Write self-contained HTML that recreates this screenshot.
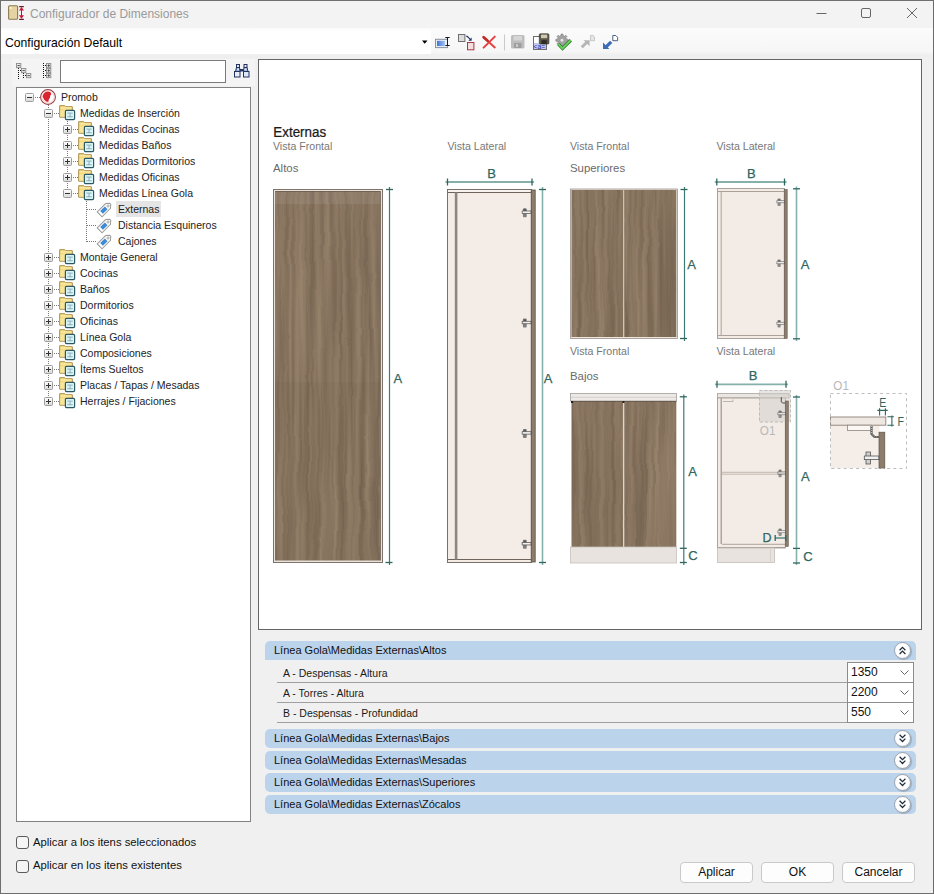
<!DOCTYPE html>
<html><head><meta charset="utf-8">
<style>
*{box-sizing:border-box;margin:0;padding:0}
html,body{width:934px;height:894px;overflow:hidden;background:#f0f0f0}
body{position:relative;font-family:"Liberation Sans",sans-serif;color:#000}
.a{position:absolute}
.t{position:absolute;white-space:nowrap;line-height:1}
#frame{left:0;top:0;width:934px;height:894px;border:1px solid #6f6f6f;border-right-color:#6a6a6a}
#title{left:1px;top:1px;width:932px;height:27px;background:#f3f3f3}
#tb{left:1px;top:28px;width:932px;height:30px;background:linear-gradient(#fbfbfb,#f6f6f6 80%,#f0f0f0 87%,#eeeeee)}
.tree{left:16px;top:87px;width:235px;height:735px;background:#fff;border:1px solid #828282}
.tr{position:absolute;height:16px;font-size:10.5px;line-height:16px;white-space:nowrap}
.exp{position:absolute;width:9px;height:9px;border:1px solid #a0a0a0;background:linear-gradient(#fff,#e6e6e6);border-radius:1px}
.exp:before{content:"";position:absolute;left:1px;top:3px;width:5px;height:1px;background:#3c3c3c}
.exp.p:after{content:"";position:absolute;left:3px;top:1px;width:1px;height:5px;background:#3c3c3c}
.dh{position:absolute;height:1px;background-image:linear-gradient(90deg,#8a8a8a 50%,transparent 50%);background-size:2px 1px}
.dv{position:absolute;width:1px;background-image:linear-gradient(#8a8a8a 50%,transparent 50%);background-size:1px 2px}
.hdr{position:absolute;left:265px;width:651px;height:19px;background:#bcd3ec;border-radius:5px;font-size:11px;line-height:19px;padding-left:9px;color:#111}
.chev{position:absolute;right:5px;top:1px;width:17px;height:17px;border-radius:50%;background:radial-gradient(circle at 45% 40%,#fff 55%,#e9ecf0);border:1px solid #9aa2ac;box-shadow:1px 1px 1px rgba(0,0,0,.2)}
.row{position:absolute;left:277px;width:571px;height:21px;border-bottom:1px solid #a0a0a0;font-size:10.5px;line-height:23px;padding-left:6px;color:#1a1a1a}
.cmb{position:absolute;left:847px;width:67px;height:21px;background:#fff;border:1px solid #8c8c8c;font-size:12px;line-height:19px;padding-left:3px;color:#111}
.cmb svg{position:absolute;right:4px;top:7px}
.btn{position:absolute;top:862px;width:73px;height:21px;background:#fdfdfd;border:1px solid #c9c9c9;border-radius:4px;font-size:12px;line-height:19px;text-align:center;color:#111}
.cb{position:absolute;left:16px;width:13px;height:13px;border:1px solid #5a5a5a;border-radius:3px;background:#f5f5f5}
</style></head><body>
<div class="a" id="title"></div>
<svg class="a" style="left:0;top:0" width="934" height="28">
 <defs><linearGradient id="door" x1="0" x2="1"><stop offset="0" stop-color="#c9b27c"/><stop offset=".5" stop-color="#e3d3a5"/><stop offset="1" stop-color="#b89c62"/></linearGradient></defs>
 <rect x="8.6" y="5.7" width="9" height="13.6" rx="1" fill="#e6d3a2" stroke="#8c7b55" stroke-width="1.1"/>
 <rect x="9.6" y="7" width="2" height="2" fill="#fff3c8"/>
 <path d="M19.2 6.6h4.6M19.2 19.3h4.6" stroke="#6a1524" stroke-width="1.3"/>
 <path d="M21.5 8.5v9" stroke="#6a1f2a" stroke-width=".9"/>
 <path d="M19 10.6l2.5-3.6 2.5 3.6zM19 15.2l2.5 3.6 2.5-3.6z" fill="#c8163a"/>
 <text x="30" y="17.7" font-family="Liberation Sans" font-size="12" fill="#9a9a9a">Configurador de Dimensiones</text>
 <path d="M816.5 13.5h10" stroke="#666" stroke-width="1"/>
 <rect x="861.5" y="8.5" width="9" height="9" rx="1.5" fill="none" stroke="#666" stroke-width="1"/>
 <path d="M907 8l10 10M917 8l-10 10" stroke="#666" stroke-width="1"/>
</svg>
<div class="a" id="tb"></div>
<div class="a" style="left:1px;top:30px;width:430px;height:24px;background:#fff"></div>
<div class="t" style="left:5px;top:37px;font-size:12.2px;color:#000">Configuración Default</div>
<svg class="a" style="left:0;top:28px" width="934" height="30">
 <path d="M422 12.6h5.5l-2.75 3.2z" fill="#000"/>
 <!-- rename icon -->
 <defs>
  <linearGradient id="blu" x1="0" x2="1"><stop offset="0" stop-color="#3c74d6"/><stop offset="1" stop-color="#a9c3ee"/></linearGradient>
  <linearGradient id="gearg" x1="0" y1="0" x2="0" y2="1"><stop offset="0" stop-color="#b0b0b0"/><stop offset="1" stop-color="#7d7d7d"/></linearGradient>
 </defs>
 <rect x="435.5" y="11.3" width="12" height="8.3" fill="#eef1f6" stroke="#8792a0" stroke-width="1"/>
 <rect x="437" y="12.8" width="8" height="5.3" fill="url(#blu)"/>
 <path d="M445.3 9.5h4.4M447.5 9.5v8M445.3 17.5h4.4" stroke="#1a1a1a" stroke-width="1" fill="none"/>
 <!-- move icon -->
 <rect x="458.5" y="6.5" width="6.4" height="7" fill="#dcdcdc" stroke="#6f6f6f" stroke-width="1"/>
 <path d="M466 8.3h1.2l3.3 3.3" stroke="#1b2f66" stroke-width="1.1" fill="none"/>
 <path d="M471.6 12.7v-3.2l-3.2 3.2z" fill="#1b2f66"/>
 <rect x="467.5" y="14.5" width="6.4" height="7.3" fill="#f5dede" stroke="#a8384a" stroke-width="1"/>
 <!-- red X -->
 <path d="M483.6 9.2l11.2 10.2M494.8 8.6l-11.2 11" stroke="#e5403f" stroke-width="2" stroke-linecap="round"/>
 <path d="M483.6 9.2l4 3.6" stroke="#c42a2a" stroke-width="2.6" stroke-linecap="round"/>
 <path d="M504.5 6.5v16" stroke="#c9c9c9" stroke-width="1"/>
 <!-- save grey -->
 <rect x="511" y="7" width="13.5" height="13.5" rx="1.5" fill="#bdbdbd"/>
 <rect x="513.5" y="8" width="8.5" height="4.5" fill="#d6d6d6"/>
 <rect x="514" y="15" width="7.5" height="5" fill="#9e9e9e"/>
 <rect x="516" y="16" width="2" height="3" fill="#c9c9c9"/>
 <!-- save as -->
 <rect x="533.5" y="8.5" width="13" height="13" fill="#fff" stroke="#6d6d6d" stroke-width="1"/>
 <rect x="534" y="15" width="12" height="6" fill="#c3c9ee"/>
 <text x="533.6" y="20.8" font-family="Liberation Sans" font-size="6.8" fill="#1c2a9c">&lt;a=</text>
 <rect x="539.3" y="5.8" width="9.6" height="10.2" rx="1" fill="#595548" stroke="#3b3a33" stroke-width=".7"/>
 <rect x="541" y="6.6" width="6.2" height="3.6" fill="#cfc9b0"/>
 <rect x="541.5" y="12.2" width="5.2" height="3.8" fill="#2c2b26"/>
 <!-- gear check -->
 <g transform="translate(562,12.2)">
  <path d="M4.59 -1.03 L6.12 -0.99 L6.12 0.99 L4.59 1.03 L3.97 2.52 L5.03 3.63 L3.63 5.03 L2.52 3.97 L1.03 4.59 L0.99 6.12 L-0.99 6.12 L-1.03 4.59 L-2.52 3.97 L-3.63 5.03 L-5.03 3.63 L-3.97 2.52 L-4.59 1.03 L-6.12 0.99 L-6.12 -0.99 L-4.59 -1.03 L-3.97 -2.52 L-5.03 -3.63 L-3.63 -5.03 L-2.52 -3.97 L-1.03 -4.59 L-0.99 -6.12 L0.99 -6.12 L1.03 -4.59 L2.52 -3.97 L3.63 -5.03 L5.03 -3.63 L3.97 -2.52Z" fill="#a3a3a3" stroke="#7d7d7d" stroke-width=".6"/>
  <circle r="2" fill="#e6e6e6" stroke="#8a8a8a" stroke-width=".6"/>
 </g>
 <path d="M558.5 16.2l4 4.2 8.3-8.2" stroke="#2c7a2e" stroke-width="3.4" fill="none" stroke-linejoin="miter"/>
 <path d="M558.5 16.2l4 4.2 8.3-8.2" stroke="#6ad35e" stroke-width="1.8" fill="none" stroke-linejoin="miter"/>
 <!-- grey arrow NE -->
 <path d="M590.5 7.5h2.6l1.4 1.4v3.8h-4z" fill="#e6e6e6" stroke="#bdbdbd" stroke-width=".8"/>
 <path d="M581.8 19.3l5.6-5.6" stroke="#b5b5b5" stroke-width="3"/>
 <path d="M583.6 12.2h6v6z" fill="#b5b5b5"/>
 <!-- blue arrow SW -->
 <path d="M612.8 7.5h3l1.8 1.8v3.4h-4.8z" fill="#fff" stroke="#3a4f7a" stroke-width=".9"/>
 <path d="M611.2 13.8l-5.4 5.4" stroke="#3d6db4" stroke-width="3.2"/>
 <path d="M603 14.5v6.4h6.4z" fill="#3d6db4"/>
</svg>

<div class="a" style="left:12px;top:59px;width:243px;height:27px;background:#f4f4f4"></div>
<svg class="a" style="left:0;top:56px" width="260" height="30">
 <g fill="#111"><rect x="18" y="12" width="1" height="1"/><rect x="18" y="14" width="1" height="1"/><rect x="18" y="16" width="1" height="1"/><rect x="18" y="18" width="1" height="1"/><rect x="18" y="20" width="1" height="1"/><rect x="18" y="22" width="1" height="1"/><rect x="20" y="14" width="1" height="1"/><rect x="23" y="17" width="1" height="1"/><rect x="23" y="19" width="1" height="1"/><rect x="23" y="21" width="1" height="1"/><rect x="25" y="19" width="1" height="1"/><rect x="43" y="7" width="1" height="1"/><rect x="43" y="9" width="1" height="1"/><rect x="43" y="11" width="1" height="1"/><rect x="43" y="13" width="1" height="1"/><rect x="43" y="15" width="1" height="1"/><rect x="43" y="17" width="1" height="1"/><rect x="43" y="19" width="1" height="1"/><rect x="43" y="21" width="1" height="1"/><rect x="45" y="9" width="1" height="1"/><rect x="45" y="14" width="1" height="1"/><rect x="45" y="19" width="1" height="1"/></g><rect x="16.5" y="7.5" width="4.3" height="4.2" fill="#e8e8e8" stroke="#8d8d8d" stroke-width=".9"/><path d="M17.5 9.6h2.4" stroke="#444" stroke-width=".9"/><rect x="21.5" y="12.5" width="4.3" height="4.2" fill="#e8e8e8" stroke="#8d8d8d" stroke-width=".9"/><path d="M22.5 14.6h2.4" stroke="#444" stroke-width=".9"/><rect x="26.5" y="17.5" width="4.3" height="4.2" fill="#e8e8e8" stroke="#8d8d8d" stroke-width=".9"/><path d="M27.5 19.6h2.4" stroke="#444" stroke-width=".9"/><rect x="46.5" y="7.5" width="4.3" height="4.2" fill="#e8e8e8" stroke="#8d8d8d" stroke-width=".9"/><path d="M47.5 9.6h2.4" stroke="#444" stroke-width=".9"/><path d="M48.7 8.3v2.6" stroke="#444" stroke-width=".9"/><rect x="46.5" y="12.5" width="4.3" height="4.2" fill="#e8e8e8" stroke="#8d8d8d" stroke-width=".9"/><path d="M47.5 14.6h2.4" stroke="#444" stroke-width=".9"/><path d="M48.7 13.3v2.6" stroke="#444" stroke-width=".9"/><rect x="46.5" y="17.5" width="4.3" height="4.2" fill="#e8e8e8" stroke="#8d8d8d" stroke-width=".9"/><path d="M47.5 19.6h2.4" stroke="#444" stroke-width=".9"/><path d="M48.7 18.3v2.6" stroke="#444" stroke-width=".9"/>
 <rect x="60.5" y="4.5" width="165" height="22" fill="#fff" stroke="#7a7a7a"/>
 <!-- binoculars -->
 <g stroke="#22335f" stroke-width="1">
  <rect x="234.5" y="15.5" width="5.5" height="5.5" fill="#e6eefa"/>
  <rect x="243.5" y="15.5" width="5.5" height="5.5" fill="#dce6f7"/>
  <path d="M235.5 15.5l1-4h3l0.5 4z" fill="#9fb3dc"/>
  <path d="M243.5 15.5l0.5-4h3l1 4z" fill="#9fb3dc"/>
  <rect x="236.5" y="8.5" width="3" height="3" fill="#dfe7f6"/>
  <rect x="244" y="8.5" width="3" height="3" fill="#dfe7f6"/>
 </g>
 <rect x="240" y="13" width="3.5" height="2.5" fill="#22335f"/>
 <path d="M237 13.2h2M244.5 13.2h2" stroke="#f4f8ff" stroke-width="1"/>
</svg>
<div class="a tree"></div>
<div class="a" style="left:116px;top:201px;width:45px;height:16px;background:#e5e5e5"></div>
<!--TREE--><svg class="a" style="left:0;top:0" width="260" height="420"><defs><linearGradient id="expg" x1="0" y1="0" x2="0" y2="1"><stop offset="0" stop-color="#ffffff"/><stop offset="1" stop-color="#d9d9d9"/></linearGradient>
<linearGradient id="foldg" x1="0" y1="0" x2="0" y2="1"><stop offset="0" stop-color="#f5e6a8"/><stop offset="1" stop-color="#e2c06a"/></linearGradient>
<g id="fold">
 <path d="M0.7 0.7H5.8L6.8 1.7H13.3V12.2H0.7Z" fill="#f5dc84" stroke="#a88b45" stroke-width="1"/>
 <path d="M1.5 2.8H12.5" stroke="#fbeaa8" stroke-width="1.2"/>
 <rect x="1.3" y="5.6" width="6" height="6" fill="#f8e59b"/>
 <rect x="6.4" y="5.4" width="9.2" height="9.2" rx="1" fill="#d9f3f7" stroke="#2f5962" stroke-width="1.2"/>
 <path d="M8.3 8.1h5.4M8.3 11.7h5.4M11 8.1v4" stroke="#86aab2" stroke-width=".9"/>
</g>
<g id="tag">
 <g transform="translate(7.8,8.2) rotate(-45)">
  <path d="M-7.3 -3.4H4.6L7.6 -0.8V0.8L4.6 3.4H-7.3z" fill="#fdfdfd" stroke="#9b9b9b" stroke-width="1"/>
  <rect x="-4.6" y="-1.9" width="6.6" height="3.8" fill="#3d8ad6"/>
  <circle cx="4.6" cy="0" r="1.1" fill="#fff" stroke="#8a8a8a" stroke-width=".7"/>
 </g>
</g>
<g id="promob">
 <circle cx="8" cy="8" r="7.4" fill="#fff" stroke="#9a3d44" stroke-width="1.1"/>
 <circle cx="8" cy="8" r="6.2" fill="none" stroke="#f4c4c4" stroke-width=".9"/>
 <path d="M2.6 7.5L3.5 5 5.5 3 8 2.4 10.5 3.3 11.3 5.3 10.2 6.8 10 8.4 8.8 10.6 8.3 13 6 12.5 4 10.6z" fill="#d9232e"/>
</g>
</defs><g fill="#7a7a7a"><rect x="48" y="105" width="1" height="1"/><rect x="48" y="107" width="1" height="1"/><rect x="48" y="109" width="1" height="1"/><rect x="48" y="111" width="1" height="1"/><rect x="48" y="113" width="1" height="1"/><rect x="48" y="115" width="1" height="1"/><rect x="48" y="117" width="1" height="1"/><rect x="48" y="119" width="1" height="1"/><rect x="48" y="121" width="1" height="1"/><rect x="48" y="123" width="1" height="1"/><rect x="48" y="125" width="1" height="1"/><rect x="48" y="127" width="1" height="1"/><rect x="48" y="129" width="1" height="1"/><rect x="48" y="131" width="1" height="1"/><rect x="48" y="133" width="1" height="1"/><rect x="48" y="135" width="1" height="1"/><rect x="48" y="137" width="1" height="1"/><rect x="48" y="139" width="1" height="1"/><rect x="48" y="141" width="1" height="1"/><rect x="48" y="143" width="1" height="1"/><rect x="48" y="145" width="1" height="1"/><rect x="48" y="147" width="1" height="1"/><rect x="48" y="149" width="1" height="1"/><rect x="48" y="151" width="1" height="1"/><rect x="48" y="153" width="1" height="1"/><rect x="48" y="155" width="1" height="1"/><rect x="48" y="157" width="1" height="1"/><rect x="48" y="159" width="1" height="1"/><rect x="48" y="161" width="1" height="1"/><rect x="48" y="163" width="1" height="1"/><rect x="48" y="165" width="1" height="1"/><rect x="48" y="167" width="1" height="1"/><rect x="48" y="169" width="1" height="1"/><rect x="48" y="171" width="1" height="1"/><rect x="48" y="173" width="1" height="1"/><rect x="48" y="175" width="1" height="1"/><rect x="48" y="177" width="1" height="1"/><rect x="48" y="179" width="1" height="1"/><rect x="48" y="181" width="1" height="1"/><rect x="48" y="183" width="1" height="1"/><rect x="48" y="185" width="1" height="1"/><rect x="48" y="187" width="1" height="1"/><rect x="48" y="189" width="1" height="1"/><rect x="48" y="191" width="1" height="1"/><rect x="48" y="193" width="1" height="1"/><rect x="48" y="195" width="1" height="1"/><rect x="48" y="197" width="1" height="1"/><rect x="48" y="199" width="1" height="1"/><rect x="48" y="201" width="1" height="1"/><rect x="48" y="203" width="1" height="1"/><rect x="48" y="205" width="1" height="1"/><rect x="48" y="207" width="1" height="1"/><rect x="48" y="209" width="1" height="1"/><rect x="48" y="211" width="1" height="1"/><rect x="48" y="213" width="1" height="1"/><rect x="48" y="215" width="1" height="1"/><rect x="48" y="217" width="1" height="1"/><rect x="48" y="219" width="1" height="1"/><rect x="48" y="221" width="1" height="1"/><rect x="48" y="223" width="1" height="1"/><rect x="48" y="225" width="1" height="1"/><rect x="48" y="227" width="1" height="1"/><rect x="48" y="229" width="1" height="1"/><rect x="48" y="231" width="1" height="1"/><rect x="48" y="233" width="1" height="1"/><rect x="48" y="235" width="1" height="1"/><rect x="48" y="237" width="1" height="1"/><rect x="48" y="239" width="1" height="1"/><rect x="48" y="241" width="1" height="1"/><rect x="48" y="243" width="1" height="1"/><rect x="48" y="245" width="1" height="1"/><rect x="48" y="247" width="1" height="1"/><rect x="48" y="249" width="1" height="1"/><rect x="48" y="251" width="1" height="1"/><rect x="48" y="253" width="1" height="1"/><rect x="48" y="255" width="1" height="1"/><rect x="48" y="257" width="1" height="1"/><rect x="48" y="259" width="1" height="1"/><rect x="48" y="261" width="1" height="1"/><rect x="48" y="263" width="1" height="1"/><rect x="48" y="265" width="1" height="1"/><rect x="48" y="267" width="1" height="1"/><rect x="48" y="269" width="1" height="1"/><rect x="48" y="271" width="1" height="1"/><rect x="48" y="273" width="1" height="1"/><rect x="48" y="275" width="1" height="1"/><rect x="48" y="277" width="1" height="1"/><rect x="48" y="279" width="1" height="1"/><rect x="48" y="281" width="1" height="1"/><rect x="48" y="283" width="1" height="1"/><rect x="48" y="285" width="1" height="1"/><rect x="48" y="287" width="1" height="1"/><rect x="48" y="289" width="1" height="1"/><rect x="48" y="291" width="1" height="1"/><rect x="48" y="293" width="1" height="1"/><rect x="48" y="295" width="1" height="1"/><rect x="48" y="297" width="1" height="1"/><rect x="48" y="299" width="1" height="1"/><rect x="48" y="301" width="1" height="1"/><rect x="48" y="303" width="1" height="1"/><rect x="48" y="305" width="1" height="1"/><rect x="48" y="307" width="1" height="1"/><rect x="48" y="309" width="1" height="1"/><rect x="48" y="311" width="1" height="1"/><rect x="48" y="313" width="1" height="1"/><rect x="48" y="315" width="1" height="1"/><rect x="48" y="317" width="1" height="1"/><rect x="48" y="319" width="1" height="1"/><rect x="48" y="321" width="1" height="1"/><rect x="48" y="323" width="1" height="1"/><rect x="48" y="325" width="1" height="1"/><rect x="48" y="327" width="1" height="1"/><rect x="48" y="329" width="1" height="1"/><rect x="48" y="331" width="1" height="1"/><rect x="48" y="333" width="1" height="1"/><rect x="48" y="335" width="1" height="1"/><rect x="48" y="337" width="1" height="1"/><rect x="48" y="339" width="1" height="1"/><rect x="48" y="341" width="1" height="1"/><rect x="48" y="343" width="1" height="1"/><rect x="48" y="345" width="1" height="1"/><rect x="48" y="347" width="1" height="1"/><rect x="48" y="349" width="1" height="1"/><rect x="48" y="351" width="1" height="1"/><rect x="48" y="353" width="1" height="1"/><rect x="48" y="355" width="1" height="1"/><rect x="48" y="357" width="1" height="1"/><rect x="48" y="359" width="1" height="1"/><rect x="48" y="361" width="1" height="1"/><rect x="48" y="363" width="1" height="1"/><rect x="48" y="365" width="1" height="1"/><rect x="48" y="367" width="1" height="1"/><rect x="48" y="369" width="1" height="1"/><rect x="48" y="371" width="1" height="1"/><rect x="48" y="373" width="1" height="1"/><rect x="48" y="375" width="1" height="1"/><rect x="48" y="377" width="1" height="1"/><rect x="48" y="379" width="1" height="1"/><rect x="48" y="381" width="1" height="1"/><rect x="48" y="383" width="1" height="1"/><rect x="48" y="385" width="1" height="1"/><rect x="48" y="387" width="1" height="1"/><rect x="48" y="389" width="1" height="1"/><rect x="48" y="391" width="1" height="1"/><rect x="48" y="393" width="1" height="1"/><rect x="48" y="395" width="1" height="1"/><rect x="48" y="397" width="1" height="1"/><rect x="48" y="399" width="1" height="1"/><rect x="48" y="401" width="1" height="1"/><rect x="67" y="121" width="1" height="1"/><rect x="67" y="123" width="1" height="1"/><rect x="67" y="125" width="1" height="1"/><rect x="67" y="127" width="1" height="1"/><rect x="67" y="129" width="1" height="1"/><rect x="67" y="131" width="1" height="1"/><rect x="67" y="133" width="1" height="1"/><rect x="67" y="135" width="1" height="1"/><rect x="67" y="137" width="1" height="1"/><rect x="67" y="139" width="1" height="1"/><rect x="67" y="141" width="1" height="1"/><rect x="67" y="143" width="1" height="1"/><rect x="67" y="145" width="1" height="1"/><rect x="67" y="147" width="1" height="1"/><rect x="67" y="149" width="1" height="1"/><rect x="67" y="151" width="1" height="1"/><rect x="67" y="153" width="1" height="1"/><rect x="67" y="155" width="1" height="1"/><rect x="67" y="157" width="1" height="1"/><rect x="67" y="159" width="1" height="1"/><rect x="67" y="161" width="1" height="1"/><rect x="67" y="163" width="1" height="1"/><rect x="67" y="165" width="1" height="1"/><rect x="67" y="167" width="1" height="1"/><rect x="67" y="169" width="1" height="1"/><rect x="67" y="171" width="1" height="1"/><rect x="67" y="173" width="1" height="1"/><rect x="67" y="175" width="1" height="1"/><rect x="67" y="177" width="1" height="1"/><rect x="67" y="179" width="1" height="1"/><rect x="67" y="181" width="1" height="1"/><rect x="67" y="183" width="1" height="1"/><rect x="67" y="185" width="1" height="1"/><rect x="67" y="187" width="1" height="1"/><rect x="67" y="189" width="1" height="1"/><rect x="67" y="191" width="1" height="1"/><rect x="67" y="193" width="1" height="1"/><rect x="86" y="201" width="1" height="1"/><rect x="86" y="203" width="1" height="1"/><rect x="86" y="205" width="1" height="1"/><rect x="86" y="207" width="1" height="1"/><rect x="86" y="209" width="1" height="1"/><rect x="86" y="211" width="1" height="1"/><rect x="86" y="213" width="1" height="1"/><rect x="86" y="215" width="1" height="1"/><rect x="86" y="217" width="1" height="1"/><rect x="86" y="219" width="1" height="1"/><rect x="86" y="221" width="1" height="1"/><rect x="86" y="223" width="1" height="1"/><rect x="86" y="225" width="1" height="1"/><rect x="86" y="227" width="1" height="1"/><rect x="86" y="229" width="1" height="1"/><rect x="86" y="231" width="1" height="1"/><rect x="86" y="233" width="1" height="1"/><rect x="86" y="235" width="1" height="1"/><rect x="86" y="237" width="1" height="1"/><rect x="86" y="239" width="1" height="1"/><rect x="86" y="241" width="1" height="1"/><rect x="35" y="97" width="1" height="1"/><rect x="37" y="97" width="1" height="1"/><rect x="39" y="97" width="1" height="1"/><rect x="54" y="113" width="1" height="1"/><rect x="56" y="113" width="1" height="1"/><rect x="58" y="113" width="1" height="1"/><rect x="73" y="129" width="1" height="1"/><rect x="75" y="129" width="1" height="1"/><rect x="77" y="129" width="1" height="1"/><rect x="73" y="145" width="1" height="1"/><rect x="75" y="145" width="1" height="1"/><rect x="77" y="145" width="1" height="1"/><rect x="73" y="161" width="1" height="1"/><rect x="75" y="161" width="1" height="1"/><rect x="77" y="161" width="1" height="1"/><rect x="73" y="177" width="1" height="1"/><rect x="75" y="177" width="1" height="1"/><rect x="77" y="177" width="1" height="1"/><rect x="73" y="193" width="1" height="1"/><rect x="75" y="193" width="1" height="1"/><rect x="77" y="193" width="1" height="1"/><rect x="87" y="209" width="1" height="1"/><rect x="89" y="209" width="1" height="1"/><rect x="91" y="209" width="1" height="1"/><rect x="93" y="209" width="1" height="1"/><rect x="95" y="209" width="1" height="1"/><rect x="87" y="225" width="1" height="1"/><rect x="89" y="225" width="1" height="1"/><rect x="91" y="225" width="1" height="1"/><rect x="93" y="225" width="1" height="1"/><rect x="95" y="225" width="1" height="1"/><rect x="87" y="241" width="1" height="1"/><rect x="89" y="241" width="1" height="1"/><rect x="91" y="241" width="1" height="1"/><rect x="93" y="241" width="1" height="1"/><rect x="95" y="241" width="1" height="1"/><rect x="54" y="257" width="1" height="1"/><rect x="56" y="257" width="1" height="1"/><rect x="58" y="257" width="1" height="1"/><rect x="54" y="273" width="1" height="1"/><rect x="56" y="273" width="1" height="1"/><rect x="58" y="273" width="1" height="1"/><rect x="54" y="289" width="1" height="1"/><rect x="56" y="289" width="1" height="1"/><rect x="58" y="289" width="1" height="1"/><rect x="54" y="305" width="1" height="1"/><rect x="56" y="305" width="1" height="1"/><rect x="58" y="305" width="1" height="1"/><rect x="54" y="321" width="1" height="1"/><rect x="56" y="321" width="1" height="1"/><rect x="58" y="321" width="1" height="1"/><rect x="54" y="337" width="1" height="1"/><rect x="56" y="337" width="1" height="1"/><rect x="58" y="337" width="1" height="1"/><rect x="54" y="353" width="1" height="1"/><rect x="56" y="353" width="1" height="1"/><rect x="58" y="353" width="1" height="1"/><rect x="54" y="369" width="1" height="1"/><rect x="56" y="369" width="1" height="1"/><rect x="58" y="369" width="1" height="1"/><rect x="54" y="385" width="1" height="1"/><rect x="56" y="385" width="1" height="1"/><rect x="58" y="385" width="1" height="1"/><rect x="54" y="401" width="1" height="1"/><rect x="56" y="401" width="1" height="1"/><rect x="58" y="401" width="1" height="1"/></g><g transform="translate(25,93)"><rect x=".5" y=".5" width="8" height="8" rx="1" fill="url(#expg)" stroke="#9d9d9d"/><path d="M2 4.5h5" stroke="#333"/></g><use href="#promob" x="40" y="89"/><g transform="translate(44,109)"><rect x=".5" y=".5" width="8" height="8" rx="1" fill="url(#expg)" stroke="#9d9d9d"/><path d="M2 4.5h5" stroke="#333"/></g><use href="#fold" x="59" y="105"/><g transform="translate(63,125)"><rect x=".5" y=".5" width="8" height="8" rx="1" fill="url(#expg)" stroke="#9d9d9d"/><path d="M2 4.5h5" stroke="#333"/><path d="M4.5 2v5" stroke="#333"/></g><use href="#fold" x="78" y="121"/><g transform="translate(63,141)"><rect x=".5" y=".5" width="8" height="8" rx="1" fill="url(#expg)" stroke="#9d9d9d"/><path d="M2 4.5h5" stroke="#333"/><path d="M4.5 2v5" stroke="#333"/></g><use href="#fold" x="78" y="137"/><g transform="translate(63,157)"><rect x=".5" y=".5" width="8" height="8" rx="1" fill="url(#expg)" stroke="#9d9d9d"/><path d="M2 4.5h5" stroke="#333"/><path d="M4.5 2v5" stroke="#333"/></g><use href="#fold" x="78" y="153"/><g transform="translate(63,173)"><rect x=".5" y=".5" width="8" height="8" rx="1" fill="url(#expg)" stroke="#9d9d9d"/><path d="M2 4.5h5" stroke="#333"/><path d="M4.5 2v5" stroke="#333"/></g><use href="#fold" x="78" y="169"/><g transform="translate(63,189)"><rect x=".5" y=".5" width="8" height="8" rx="1" fill="url(#expg)" stroke="#9d9d9d"/><path d="M2 4.5h5" stroke="#333"/></g><use href="#fold" x="78" y="185"/><use href="#tag" x="97" y="201"/><use href="#tag" x="97" y="217"/><use href="#tag" x="97" y="233"/><g transform="translate(44,253)"><rect x=".5" y=".5" width="8" height="8" rx="1" fill="url(#expg)" stroke="#9d9d9d"/><path d="M2 4.5h5" stroke="#333"/><path d="M4.5 2v5" stroke="#333"/></g><use href="#fold" x="59" y="249"/><g transform="translate(44,269)"><rect x=".5" y=".5" width="8" height="8" rx="1" fill="url(#expg)" stroke="#9d9d9d"/><path d="M2 4.5h5" stroke="#333"/><path d="M4.5 2v5" stroke="#333"/></g><use href="#fold" x="59" y="265"/><g transform="translate(44,285)"><rect x=".5" y=".5" width="8" height="8" rx="1" fill="url(#expg)" stroke="#9d9d9d"/><path d="M2 4.5h5" stroke="#333"/><path d="M4.5 2v5" stroke="#333"/></g><use href="#fold" x="59" y="281"/><g transform="translate(44,301)"><rect x=".5" y=".5" width="8" height="8" rx="1" fill="url(#expg)" stroke="#9d9d9d"/><path d="M2 4.5h5" stroke="#333"/><path d="M4.5 2v5" stroke="#333"/></g><use href="#fold" x="59" y="297"/><g transform="translate(44,317)"><rect x=".5" y=".5" width="8" height="8" rx="1" fill="url(#expg)" stroke="#9d9d9d"/><path d="M2 4.5h5" stroke="#333"/><path d="M4.5 2v5" stroke="#333"/></g><use href="#fold" x="59" y="313"/><g transform="translate(44,333)"><rect x=".5" y=".5" width="8" height="8" rx="1" fill="url(#expg)" stroke="#9d9d9d"/><path d="M2 4.5h5" stroke="#333"/><path d="M4.5 2v5" stroke="#333"/></g><use href="#fold" x="59" y="329"/><g transform="translate(44,349)"><rect x=".5" y=".5" width="8" height="8" rx="1" fill="url(#expg)" stroke="#9d9d9d"/><path d="M2 4.5h5" stroke="#333"/><path d="M4.5 2v5" stroke="#333"/></g><use href="#fold" x="59" y="345"/><g transform="translate(44,365)"><rect x=".5" y=".5" width="8" height="8" rx="1" fill="url(#expg)" stroke="#9d9d9d"/><path d="M2 4.5h5" stroke="#333"/><path d="M4.5 2v5" stroke="#333"/></g><use href="#fold" x="59" y="361"/><g transform="translate(44,381)"><rect x=".5" y=".5" width="8" height="8" rx="1" fill="url(#expg)" stroke="#9d9d9d"/><path d="M2 4.5h5" stroke="#333"/><path d="M4.5 2v5" stroke="#333"/></g><use href="#fold" x="59" y="377"/><g transform="translate(44,397)"><rect x=".5" y=".5" width="8" height="8" rx="1" fill="url(#expg)" stroke="#9d9d9d"/><path d="M2 4.5h5" stroke="#333"/><path d="M4.5 2v5" stroke="#333"/></g><use href="#fold" x="59" y="393"/></svg>
<div class="t" style="left:61px;top:92px;font-size:10.5px;color:#222">Promob</div><div class="t" style="left:80px;top:108px;font-size:10.5px;color:#222">Medidas de Inserción</div><div class="t" style="left:99px;top:124px;font-size:10.5px;color:#222">Medidas Cocinas</div><div class="t" style="left:99px;top:140px;font-size:10.5px;color:#222">Medidas Baños</div><div class="t" style="left:99px;top:156px;font-size:10.5px;color:#222">Medidas Dormitorios</div><div class="t" style="left:99px;top:172px;font-size:10.5px;color:#222">Medidas Oficinas</div><div class="t" style="left:99px;top:188px;font-size:10.5px;color:#222">Medidas Línea Gola</div><div class="t" style="left:118px;top:204px;font-size:10.5px;color:#222">Externas</div><div class="t" style="left:118px;top:220px;font-size:10.5px;color:#222">Distancia Esquineros</div><div class="t" style="left:118px;top:236px;font-size:10.5px;color:#222">Cajones</div><div class="t" style="left:80px;top:252px;font-size:10.5px;color:#222">Montaje General</div><div class="t" style="left:80px;top:268px;font-size:10.5px;color:#222">Cocinas</div><div class="t" style="left:80px;top:284px;font-size:10.5px;color:#222">Baños</div><div class="t" style="left:80px;top:300px;font-size:10.5px;color:#222">Dormitorios</div><div class="t" style="left:80px;top:316px;font-size:10.5px;color:#222">Oficinas</div><div class="t" style="left:80px;top:332px;font-size:10.5px;color:#222">Línea Gola</div><div class="t" style="left:80px;top:348px;font-size:10.5px;color:#222">Composiciones</div><div class="t" style="left:80px;top:364px;font-size:10.5px;color:#222">Ítems Sueltos</div><div class="t" style="left:80px;top:380px;font-size:10.5px;color:#222">Placas / Tapas / Mesadas</div><div class="t" style="left:80px;top:396px;font-size:10.5px;color:#222">Herrajes / Fijaciones</div><!--/TREE-->
<!--DRAW--><svg class="a" style="left:258px;top:59px" width="664" height="571" viewBox="258 59 664 571" font-family="Liberation Sans"><defs>
<filter id="grain" x="0" y="0" width="100%" height="100%" color-interpolation-filters="sRGB">
 <feTurbulence type="fractalNoise" baseFrequency="0.2 0.005" numOctaves="3" seed="11" result="n"/>
 <feTurbulence type="fractalNoise" baseFrequency="0.02 0.03" numOctaves="2" seed="3" result="w"/>
 <feDisplacementMap in="n" in2="w" scale="5" xChannelSelector="R" yChannelSelector="G" result="d"/>
 <feGaussianBlur in="d" stdDeviation="0.35" result="b"/>
 <feColorMatrix in="b" type="matrix" values="0.2 0 0 0 0.43  0.18 0 0 0 0.364  0.16 0 0 0 0.292  0 0 0 0 1"/>
</filter>
<pattern id="wood" patternUnits="userSpaceOnUse" x="0" y="0" width="934" height="600">
 <rect width="934" height="600" fill="#8a7561"/>
 <rect width="934" height="600" filter="url(#grain)" opacity="1"/>
</pattern>
</defs><rect x="258.5" y="59.5" width="663" height="570" fill="#fff" stroke="#646464"/><text transform="translate(273.3,136.6) scale(0.93,1)" font-size="14.4" fill="#1a1a1a" stroke="#1a1a1a" stroke-width=".25">Externas</text><text x="273" y="150" font-size="10.6" fill="#777777">Vista Frontal</text><text x="447.5" y="150" font-size="10.6" fill="#777777">Vista Lateral</text><text x="570" y="150" font-size="10.6" fill="#777777">Vista Frontal</text><text x="716.5" y="150" font-size="10.6" fill="#777777">Vista Lateral</text><text x="570" y="355.3" font-size="10.6" fill="#777777">Vista Frontal</text><text x="716.5" y="355.3" font-size="10.6" fill="#777777">Vista Lateral</text><text x="273" y="171.5" font-size="11.4" fill="#6a6a6a">Altos</text><text x="570" y="171.5" font-size="11.4" fill="#6a6a6a">Superiores</text><text x="570" y="379.5" font-size="11.4" fill="#6a6a6a">Bajos</text><rect x="273.5" y="189.5" width="109" height="373" fill="#e9e2db" stroke="#7d736a"/><rect x="275" y="191" width="105.5" height="369.5" fill="url(#wood)"/><rect x="275" y="191" width="105.5" height="13" fill="#fff" opacity=".07"/><rect x="275" y="382" width="105.5" height="178.5" fill="#000" opacity=".025"/><path d="M275.5 191.5H380.5V560.5" stroke="#5d5044" stroke-width="1" fill="none" opacity=".6"/><path d="M389.5 187V565" stroke="#3f7a74" stroke-width="1.2"/><path d="M386.0 189.5h7.0" stroke="#2f665e" stroke-width="1.3"/><path d="M385.5 562.5h7.0" stroke="#2f665e" stroke-width="1.3"/><text x="393.5" y="382.8" font-size="13" fill="#2f665e" stroke="#2f665e" stroke-width=".25">A</text><rect x="447.5" y="189.5" width="84" height="373" fill="#f4ece6" stroke="#7a7068"/><rect x="448" y="190" width="83" height="2.5" fill="#f7f2ee"/><path d="M448 192.5H531" stroke="#6e645c" stroke-width="1"/><path d="M448 559.5H531" stroke="#6e645c" stroke-width="1"/><rect x="454.8" y="192.5" width="2.6" height="367" fill="#8f8680"/><rect x="531.2" y="190" width="4" height="372" fill="#8c7d6c" stroke="#5e5348" stroke-width=".8"/><g transform="translate(531,212.5) scale(0.95)" opacity="0.85"><rect x="-8.5" y="-4.5" width="4" height="9.5" rx="1" fill="#6d6d6d"/><rect x="-7.8" y="-3.6" width="2.6" height="2" fill="#3d3d3d"/><rect x="-9.3" y="-1.6" width="9.3" height="2.6" fill="#f2f2f2" stroke="#3f3f3f" stroke-width=".8"/></g><g transform="translate(531,322.8) scale(0.95)" opacity="0.85"><rect x="-8.5" y="-4.5" width="4" height="9.5" rx="1" fill="#6d6d6d"/><rect x="-7.8" y="-3.6" width="2.6" height="2" fill="#3d3d3d"/><rect x="-9.3" y="-1.6" width="9.3" height="2.6" fill="#f2f2f2" stroke="#3f3f3f" stroke-width=".8"/></g><g transform="translate(531,433.2) scale(0.95)" opacity="0.85"><rect x="-8.5" y="-4.5" width="4" height="9.5" rx="1" fill="#6d6d6d"/><rect x="-7.8" y="-3.6" width="2.6" height="2" fill="#3d3d3d"/><rect x="-9.3" y="-1.6" width="9.3" height="2.6" fill="#f2f2f2" stroke="#3f3f3f" stroke-width=".8"/></g><g transform="translate(531,544) scale(0.95)" opacity="0.85"><rect x="-8.5" y="-4.5" width="4" height="9.5" rx="1" fill="#6d6d6d"/><rect x="-7.8" y="-3.6" width="2.6" height="2" fill="#3d3d3d"/><rect x="-9.3" y="-1.6" width="9.3" height="2.6" fill="#f2f2f2" stroke="#3f3f3f" stroke-width=".8"/></g><path d="M445.5 182H534" stroke="#86b1aa" stroke-width="1.8"/><path d="M447.5 178.5v7.0" stroke="#2f665e" stroke-width="1.3"/><path d="M532 178.5v7.0" stroke="#2f665e" stroke-width="1.3"/><text x="487.3" y="178.2" font-size="13" fill="#2f665e" stroke="#2f665e" stroke-width=".25">B</text><path d="M542.5 187V565" stroke="#86b1aa" stroke-width="1.6"/><path d="M539.0 189.5h7.0" stroke="#2f665e" stroke-width="1.3"/><path d="M539.0 562.5h7.0" stroke="#2f665e" stroke-width="1.3"/><text x="543.8" y="383.3" font-size="13" fill="#2f665e" stroke="#2f665e" stroke-width=".25">A</text><rect x="570.5" y="189" width="107" height="149.5" fill="#ebe5de" stroke="#9a9089" stroke-width=".8"/><rect x="571.5" y="190" width="51.8" height="147" fill="url(#wood)"/><rect x="624.2" y="190" width="52.1" height="147" fill="url(#wood)"/><path d="M684.5 187V341" stroke="#3f7a74" stroke-width="1.2"/><path d="M680.5 189.5h7.0" stroke="#2f665e" stroke-width="1.3"/><path d="M680.0 338.5h7.0" stroke="#2f665e" stroke-width="1.3"/><text x="687.3" y="269.3" font-size="13" fill="#2f665e" stroke="#2f665e" stroke-width=".25">A</text><rect x="717.5" y="188.5" width="67" height="150" fill="#f3ebe5" stroke="#a39990" stroke-width=".9"/><path d="M718 191.5H784M718 335.5H784" stroke="#a39990" stroke-width=".9"/><rect x="720.6" y="191.5" width="1.2" height="144" fill="#b9aea6"/><rect x="784.2" y="189.5" width="3" height="149" fill="#8c7d6c" stroke="#675b50" stroke-width=".6"/><g transform="translate(784.3,202) scale(0.8)" opacity="0.75"><rect x="-8.5" y="-4.5" width="4" height="9.5" rx="1" fill="#6d6d6d"/><rect x="-7.8" y="-3.6" width="2.6" height="2" fill="#3d3d3d"/><rect x="-9.3" y="-1.6" width="9.3" height="2.6" fill="#f2f2f2" stroke="#3f3f3f" stroke-width=".8"/></g><g transform="translate(784.3,263) scale(0.8)" opacity="0.75"><rect x="-8.5" y="-4.5" width="4" height="9.5" rx="1" fill="#6d6d6d"/><rect x="-7.8" y="-3.6" width="2.6" height="2" fill="#3d3d3d"/><rect x="-9.3" y="-1.6" width="9.3" height="2.6" fill="#f2f2f2" stroke="#3f3f3f" stroke-width=".8"/></g><g transform="translate(784.3,323.5) scale(0.8)" opacity="0.75"><rect x="-8.5" y="-4.5" width="4" height="9.5" rx="1" fill="#6d6d6d"/><rect x="-7.8" y="-3.6" width="2.6" height="2" fill="#3d3d3d"/><rect x="-9.3" y="-1.6" width="9.3" height="2.6" fill="#f2f2f2" stroke="#3f3f3f" stroke-width=".8"/></g><path d="M714.8 182H786.5" stroke="#86b1aa" stroke-width="1.8"/><path d="M716.8 178.5v7.0" stroke="#2f665e" stroke-width="1.3"/><path d="M784.5 178.5v7.0" stroke="#2f665e" stroke-width="1.3"/><text x="747" y="178.2" font-size="13" fill="#2f665e" stroke="#2f665e" stroke-width=".25">B</text><path d="M796.5 186.5V341" stroke="#86b1aa" stroke-width="1.6"/><path d="M793.0 188.8h7.0" stroke="#2f665e" stroke-width="1.3"/><path d="M793.0 338.8h7.0" stroke="#2f665e" stroke-width="1.3"/><text x="800.7" y="269.3" font-size="13" fill="#2f665e" stroke="#2f665e" stroke-width=".25">A</text><rect x="570.5" y="393.5" width="106" height="7.5" fill="#ece9e6" stroke="#a29d98" stroke-width=".8"/><path d="M571 397.3H676" stroke="#d4d0cc" stroke-width="1"/><rect x="571.5" y="401" width="51.8" height="146" fill="url(#wood)"/><rect x="624.2" y="401" width="52.1" height="146" fill="url(#wood)"/><path d="M571 401.5H676.5" stroke="#4e443b" stroke-width="1" opacity=".5"/><rect x="571" y="401" width="2" height="2" fill="#222"/><rect x="622.5" y="401" width="2" height="2" fill="#222"/><rect x="570.5" y="547" width="106" height="16" fill="#e8e3de" stroke="#c6c0ba" stroke-width=".8"/><path d="M683.8 394.5V565" stroke="#3f7a74" stroke-width="1.2"/><path d="M679.8 396.8h7.0" stroke="#2f665e" stroke-width="1.3"/><path d="M679.8 548.3h7.0" stroke="#2f665e" stroke-width="1.3"/><path d="M679.8 562.5h7.0" stroke="#2f665e" stroke-width="1.3"/><text x="688.3" y="476.3" font-size="13" fill="#2f665e" stroke="#2f665e" stroke-width=".25">A</text><text x="688.3" y="560.2" font-size="13" fill="#2f665e" stroke="#2f665e" stroke-width=".25">C</text><rect x="717.5" y="393.5" width="71.5" height="4.5" fill="#eae6e2" stroke="#a8a29c" stroke-width=".8"/><rect x="717.5" y="398" width="67.8" height="150" fill="#f3ebe5" stroke="#9c9189" stroke-width=".8"/><rect x="720.5" y="398" width="1.5" height="146" fill="#b1a69e"/><path d="M722 544.3H785M718 547.5H785" stroke="#9c9189" stroke-width=".8"/><path d="M722 472.3H785M722 474.2H785" stroke="#b3a9a1" stroke-width=".8"/><path d="M723 401.5h10v-2" stroke="#b0a69e" stroke-width=".8" fill="none"/><rect x="759" y="390" width="31.5" height="32" fill="#d2cfcc" opacity=".55"/><rect x="759.5" y="390.5" width="31" height="31.5" fill="none" stroke="#b9b6b3" stroke-width=".9" stroke-dasharray="3 2"/><path d="M759.5 393.8H789" stroke="#c9c5c1" stroke-width="1"/><path d="M781.3 397.2v4.6l1.2 1.2h3" stroke="#4a4a4a" stroke-width="1" fill="none"/><rect x="785.3" y="401" width="3" height="145.5" fill="#8c7d6c" stroke="#675b50" stroke-width=".6"/><g transform="translate(785.3,414) scale(0.8)" opacity="0.7"><rect x="-8.5" y="-4.5" width="4" height="9.5" rx="1" fill="#6d6d6d"/><rect x="-7.8" y="-3.6" width="2.6" height="2" fill="#3d3d3d"/><rect x="-9.3" y="-1.6" width="9.3" height="2.6" fill="#f2f2f2" stroke="#3f3f3f" stroke-width=".8"/></g><g transform="translate(785.3,473.2) scale(0.8)" opacity="0.7"><rect x="-8.5" y="-4.5" width="4" height="9.5" rx="1" fill="#6d6d6d"/><rect x="-7.8" y="-3.6" width="2.6" height="2" fill="#3d3d3d"/><rect x="-9.3" y="-1.6" width="9.3" height="2.6" fill="#f2f2f2" stroke="#3f3f3f" stroke-width=".8"/></g><g transform="translate(785.3,532) scale(0.8)" opacity="0.7"><rect x="-8.5" y="-4.5" width="4" height="9.5" rx="1" fill="#6d6d6d"/><rect x="-7.8" y="-3.6" width="2.6" height="2" fill="#3d3d3d"/><rect x="-9.3" y="-1.6" width="9.3" height="2.6" fill="#f2f2f2" stroke="#3f3f3f" stroke-width=".8"/></g><text transform="translate(759.8,435.3) scale(0.9,1)" font-size="13" fill="#b8b8b8">O1</text><rect x="717.5" y="548" width="57" height="14.5" fill="#e8e3de" stroke="#c2bcb6" stroke-width=".8"/><path d="M770.5 548.5v14" stroke="#d6d1cc" stroke-width="1"/><path d="M715 384.3H788" stroke="#86b1aa" stroke-width="1.8"/><path d="M717 380.8v7.0" stroke="#2f665e" stroke-width="1.3"/><path d="M786 380.8v7.0" stroke="#2f665e" stroke-width="1.3"/><text x="748.8" y="380.4" font-size="13" fill="#2f665e" stroke="#2f665e" stroke-width=".25">B</text><path d="M796.5 395V565" stroke="#86b1aa" stroke-width="1.6"/><path d="M793.0 397h7.0" stroke="#2f665e" stroke-width="1.3"/><path d="M793.0 548.4h7.0" stroke="#2f665e" stroke-width="1.3"/><path d="M793.0 563h7.0" stroke="#2f665e" stroke-width="1.3"/><text x="801" y="480.6" font-size="13" fill="#2f665e" stroke="#2f665e" stroke-width=".25">A</text><text x="803.3" y="560.6" font-size="13" fill="#2f665e" stroke="#2f665e" stroke-width=".25">C</text><path d="M775 538H786" stroke="#3f7a74" stroke-width="1.3"/><path d="M775.2 535v6" stroke="#2f665e" stroke-width="1.3"/><path d="M785.8 535v6" stroke="#2f665e" stroke-width="1.3"/><text x="762.6" y="541.8" font-size="12.5" fill="#2f665e" stroke="#2f665e" stroke-width=".25">D</text><text transform="translate(833.3,389.7) scale(0.9,1)" font-size="13" fill="#b8b8b8">O1</text><rect x="830.5" y="425" width="49" height="43" fill="#f5eee8"/><rect x="830.5" y="417" width="55.3" height="8.2" fill="#efe8e2" stroke="#8a7f77" stroke-width=".9"/><rect x="847.5" y="425.2" width="24" height="5.3" fill="#fbf7f4" stroke="#8e847c" stroke-width=".8"/><path d="M871.5 426v8l3 3h4.5" stroke="#555" stroke-width="2.2" fill="none"/><path d="M871.5 426v8l3 3h4.5" stroke="#ddd" stroke-width=".8" fill="none" stroke-dasharray="1 1"/><rect x="879" y="432.2" width="5.8" height="36" fill="#8c7c6c" stroke="#5f5349" stroke-width=".7"/><rect x="866" y="452" width="4.5" height="12" fill="#cfcfcf" stroke="#555" stroke-width=".8"/><rect x="864.3" y="456" width="14.5" height="3.6" fill="#efefef" stroke="#555" stroke-width=".8"/><rect x="830.5" y="393.5" width="76" height="75" fill="none" stroke="#bdbdbd" stroke-width="1" stroke-dasharray="3 3.2"/><text transform="translate(879.3,406.8) scale(0.82,1)" font-size="13" fill="#2f665e">E</text><path d="M877.3 410.4h10.4M879.6 408.2v7.2M885.4 408.2v7.2" stroke="#2f665e" stroke-width="1.1"/><path d="M891.9 415.4v11.2M887.4 416.8h6.5M887.4 425.2h6.5" stroke="#2f665e" stroke-width="1.1"/><text transform="translate(897.6,425.8) scale(0.82,1)" font-size="13" fill="#2f665e">F</text></svg><!--/DRAW-->
<!--BOTTOM-->
<div class="hdr" style="top:641px;border-radius:5px 5px 0 0">Línea Gola\Medidas Externas\Altos<div class="chev"><svg width="15" height="15" style="position:absolute;left:0;top:0"><path d="M4.6 7.2l2.9-2.9 2.9 2.9M4.6 11l2.9-2.9 2.9 2.9" stroke="#1f2a3a" stroke-width="1.25" fill="none"/></svg></div></div>
<div class="row" style="top:662px">A - Despensas - Altura</div>
<div class="row" style="top:682px">A - Torres - Altura</div>
<div class="row" style="top:702px">B - Despensas - Profundidad</div>
<div class="cmb" style="top:662px">1350<svg width="9" height="6"><path d="M.5 .5l4 4 4-4" stroke="#666" fill="none"/></svg></div>
<div class="cmb" style="top:682px">2200<svg width="9" height="6"><path d="M.5 .5l4 4 4-4" stroke="#666" fill="none"/></svg></div>
<div class="cmb" style="top:702px">550<svg width="9" height="6"><path d="M.5 .5l4 4 4-4" stroke="#666" fill="none"/></svg></div>
<div class="hdr" style="top:729px">Línea Gola\Medidas Externas\Bajos<div class="chev"><svg width="15" height="15" style="position:absolute;left:0;top:0"><path d="M4.6 3.8l2.9 2.9 2.9-2.9M4.6 7.6l2.9 2.9 2.9-2.9" stroke="#1f2a3a" stroke-width="1.25" fill="none"/></svg></div></div>
<div class="hdr" style="top:751px">Línea Gola\Medidas Externas\Mesadas<div class="chev"><svg width="15" height="15" style="position:absolute;left:0;top:0"><path d="M4.6 3.8l2.9 2.9 2.9-2.9M4.6 7.6l2.9 2.9 2.9-2.9" stroke="#1f2a3a" stroke-width="1.25" fill="none"/></svg></div></div>
<div class="hdr" style="top:773px">Línea Gola\Medidas Externas\Superiores<div class="chev"><svg width="15" height="15" style="position:absolute;left:0;top:0"><path d="M4.6 3.8l2.9 2.9 2.9-2.9M4.6 7.6l2.9 2.9 2.9-2.9" stroke="#1f2a3a" stroke-width="1.25" fill="none"/></svg></div></div>
<div class="hdr" style="top:795px">Línea Gola\Medidas Externas\Zócalos<div class="chev"><svg width="15" height="15" style="position:absolute;left:0;top:0"><path d="M4.6 3.8l2.9 2.9 2.9-2.9M4.6 7.6l2.9 2.9 2.9-2.9" stroke="#1f2a3a" stroke-width="1.25" fill="none"/></svg></div></div>
<div class="cb" style="top:836px"></div>
<div class="t" style="left:33px;top:836.5px;font-size:11.3px;color:#111">Aplicar a los itens seleccionados</div>
<div class="cb" style="top:860px"></div>
<div class="t" style="left:33px;top:860px;font-size:11.3px;color:#111">Aplicar en los itens existentes</div>
<div class="btn" style="left:680px">Aplicar</div>
<div class="btn" style="left:761px">OK</div>
<div class="btn" style="left:842px">Cancelar</div>
<!--/BOTTOM-->
<div class="a" id="frame"></div>
</body></html>
